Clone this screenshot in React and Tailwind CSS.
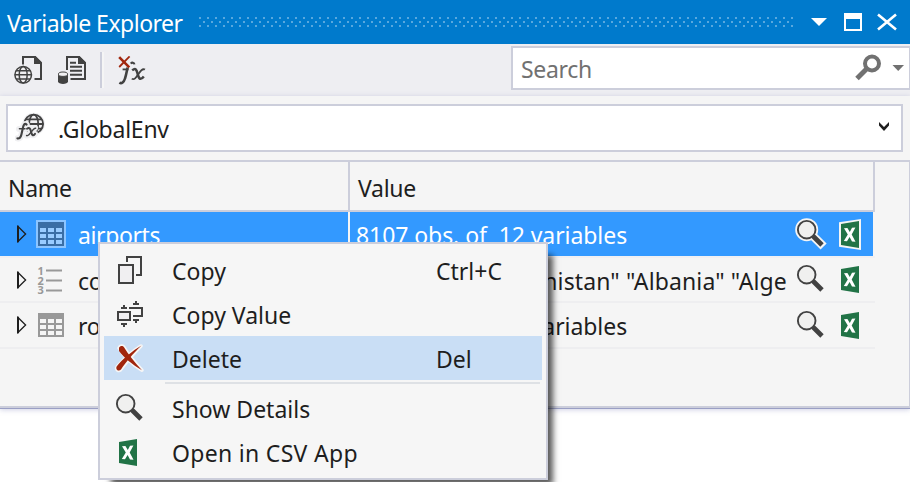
import React from "react";

function Globe({ cx, cy, r, color = "#424242", fill = "#f0eff1", w = 1.6 }) {
  return (
    <g fill="none" stroke={color} strokeWidth={w}>
      <circle cx={cx} cy={cy} r={r} fill={fill} />
      <ellipse cx={cx} cy={cy} rx={r * 0.48} ry={r} />
      <path d={`M${cx - r} ${cy}H${cx + r}M${cx - r * 0.88} ${cy - r * 0.5}H${cx + r * 0.88}M${cx - r * 0.88} ${cy + r * 0.5}H${cx + r * 0.88}`} />
    </g>
  );
}

function Magnifier({ selected }) {
  return (
    <svg width="32" height="33" viewBox="0 0 32 33" className="block shrink-0" fill="none">
      {selected && (
        <g stroke="#f5f5f5">
          <circle cx="11.7" cy="11.7" r="9" strokeWidth="5" />
          <path d="M17.5 17.5L28.6 28.6" strokeWidth="8.5" />
        </g>
      )}
      <path d="M18 18L27 27" stroke="#424242" strokeWidth="4.8" />
      <circle cx="11.7" cy="11.7" r="8.8" fill="#f0f0ef" stroke="#424242" strokeWidth="1.9" />
    </svg>
  );
}

function Excel({ selected }) {
  return (
    <svg width="22" height="31" viewBox="0 0 22 31" className="block shrink-0">
      {selected && <path d="M0 3.2L22 0V31L0 27.8Z" fill="#f5f5f5" />}
      <path d="M2 5L20 2V29L2 26Z" fill="#217346" />
      <path d="M5 9.3L8.4 9.1L10.8 13L13 8.8L16.4 8.5L12.7 15.5L16.5 22.8L13 22.5L10.6 18L8 22.2L4.8 22L8.8 15.6Z" fill="#fff" />
    </svg>
  );
}

function Expander() {
  return (
    <svg width="10" height="18" viewBox="0 0 10 18" className="block shrink-0">
      <path d="M1 1.5L8.6 9L1 16.5Z" fill="none" stroke="#1e1e1e" strokeWidth="1.3" />
      <path d="M1 0.8V17.2" stroke="#1e1e1e" strokeWidth="2" />
    </svg>
  );
}

function TableIcon({ selected }) {
  const cells = [];
  for (let r = 0; r < 3; r++)
    for (let c = 0; c < 3; c++)
      cells.push(<rect key={`${r}${c}`} x={4 + c * 8} y={8 + r * 6} width="6" height="4" fill={selected ? "#99ccff" : "#f5f5f5"} />);
  return (
    <svg width="30" height="28" viewBox="0 0 30 28" className="block shrink-0" shapeRendering="crispEdges">
      {selected && <rect width="30" height="28" fill="#8cc5ff" />}
      <rect x="2" y="2" width="26" height="24" fill={selected ? "#3a6ea5" : "#999999"} />
      {cells}
    </svg>
  );
}

function ListIcon() {
  return (
    <svg width="30" height="30" viewBox="0 0 30 30" className="block shrink-0" fill="#999">
      <g fontFamily="'Noto Sans', sans-serif" fontWeight="700" fontSize="11">
        <text x="1.5" y="9.5">1</text>
        <text x="1.5" y="19.5">2</text>
        <text x="1.5" y="29.3">3</text>
      </g>
      <path d="M10 4.5h16v2H10zM10 14.5h16v2H10zM10 24.5h16v2H10z" />
    </svg>
  );
}

function WebDocIcon() {
  return (
    <svg width="28" height="28" viewBox="0 0 28 28" className="block shrink-0">
      <path d="M9 8.5V1H21L27 7V23H20.5" fill="none" stroke="#424242" strokeWidth="2" />
      <path d="M20 0H21.5L28 6.5V8H20Z" fill="#424242" />
      <Globe cx={9.2} cy={18.8} r={8.3} w={1.5} />
    </svg>
  );
}

function DataDocIcon() {
  return (
    <svg width="28" height="28" viewBox="0 0 28 28" className="block shrink-0">
      <path d="M9 14V1H21L27 7V23H12.5" fill="none" stroke="#424242" strokeWidth="2" />
      <path d="M20 0H21.5L28 6.5V8H20Z" fill="#424242" />
      <path d="M12 6.8h6M12 10.8h12M12 14.8h12M12 18.8h12" stroke="#424242" strokeWidth="1.9" />
      <path d="M0 18.5V25.5C0 28.8 10 28.8 10 25.5V18.5Z" fill="#424242" />
      <ellipse cx="5" cy="18.2" rx="4.6" ry="2.2" fill="#f0eff1" stroke="#424242" strokeWidth="1" />
    </svg>
  );
}

function ClearFxIcon() {
  return (
    <svg width="30" height="30" viewBox="0 0 30 30" className="block shrink-0" fill="none" stroke="#424242">
      <path d="M12.8 7.6C14 6.2 16 6.4 16.4 8.4" strokeWidth="2.2" />
      <path d="M4.6 13.4H10.5" strokeWidth="1.8" />
      <path d="M9.6 11.5C8.6 16 8 19.5 7 22.5C5.9 26.2 3.6 28 1.4 26.6" strokeWidth="2.6" />
      <path d="M14.2 14.4C17.6 11.6 18.6 13.6 19.6 17.6C20.8 22.6 22.2 25 25.8 20.4" strokeWidth="2.5" />
      <path d="M27 13.6C24.4 12 22.4 15 20.4 18C18.2 21.6 16 24.4 13.8 22.6" strokeWidth="1.8" />
      <path d="M1.2 1.2L11.3 11.3" stroke="#a1260d" strokeWidth="2.6" />
      <path d="M11.6 0.4L1.2 11" stroke="#a1260d" strokeWidth="1.8" />
    </svg>
  );
}

function EnvIcon() {
  return (
    <svg width="32" height="32" viewBox="0 0 32 32" className="block shrink-0">
      <circle cx="18.7" cy="12" r="11.3" fill="#efeff1" />
      <Globe cx={18.7} cy={12} r={9.4} w={1.8} fill="#f0eff1" />
      <g fill="none" strokeLinecap="round">
        <g stroke="#efeff1" strokeWidth="6">
          <path d="M11.6 12.6C9.6 10.8 8.4 12.6 7.6 17C6.6 22 6 27.4 2.4 26.4M4 17H10" />
          <path d="M12 16.6C15 14.6 15.4 17 16 19.4C17 23.6 18 24.4 20 21.8M20 16C17 15.6 16 24 11.6 23.6" />
        </g>
        <g stroke="#424242">
          <path d="M11.6 12.6C9.6 10.8 8.4 12.6 7.6 17C6.6 22 6 27.4 2.4 26.4" strokeWidth="2.1" />
          <path d="M4.4 16.8H10" strokeWidth="1.4" />
          <path d="M12 16.8C14.6 15 15.4 17 16 19.4C17 23.6 18 24.4 20 21.8" strokeWidth="2" />
          <path d="M20.6 16.2C17.4 15.6 15.4 24.4 11.6 23.6" strokeWidth="1.5" />
        </g>
      </g>
    </svg>
  );
}

function CopyIcon() {
  return (
    <svg width="24" height="28" viewBox="0 0 24 28" className="block" fill="none" stroke="#424242" strokeWidth="2" shapeRendering="crispEdges">
      <path d="M9 6V1H23V19H18" />
      <rect x="1" y="9" width="14" height="18" fill="#f0eff1" />
    </svg>
  );
}

function CopyValueIcon() {
  return (
    <svg width="26" height="26" viewBox="0 0 26 26" className="block" shapeRendering="crispEdges">
      <path d="M12 7H25V15H16" fill="none" stroke="#424242" strokeWidth="2" />
      <rect x="1" y="11" width="12" height="8" fill="#f0eff1" stroke="#424242" strokeWidth="2" />
      <path d="M4 6H10V8H4zM6 4H8V6H6zM16 2H22V4H16zM18 0H20V2H18zM4 22H10V24H4zM6 24H8V26H6zM16 18H22V20H16zM18 20H20V22H18z" fill="#424242" />
    </svg>
  );
}

function DeleteIcon() {
  return (
    <svg width="32" height="30" viewBox="0 0 32 30" className="block" strokeLinejoin="round">
      <g stroke="#f6f6f6" strokeWidth="3.5" fill="#f6f6f6">
        <path d="M5 5C6.2 2.5 9 2.6 10 4.3C14 11 20 18.5 28 27.3C19 22 10 14 5 5Z" />
        <path d="M27 3C19 8 9 17 3 24C1.6 26.5 4.4 28.5 6.6 26.8C11 21 19 11 27 3Z" />
      </g>
      <g fill="#a1260d">
        <path d="M5 4.7C6.2 2.5 9 2.6 10 4.3C14 11 20 18.5 28 27.3C18 21.5 10 14.5 5 8Z" />
        <path d="M27.5 2.6C18 8 8.5 16.5 2.8 23.3C1 26.5 4.6 29 7 26.5C11.5 20 19 10.5 27.5 2.6Z" />
      </g>
    </svg>
  );
}

function MenuItem({ icon, label, shortcut, active }) {
  return (
    <div className={"flex h-11 items-center " + (active ? "bg-[#c9def5]" : "")}>
      <div className="flex w-[51px] shrink-0 justify-center">{icon}</div>
      <div className="ml-[17px] w-[264px] whitespace-nowrap pt-0.5">{label}</div>
      <div className="whitespace-nowrap pt-0.5">{shortcut}</div>
    </div>
  );
}

function Row({ icon, name, value, selected, height = "h-11", spacing = "tracking-[-0.07px]" }) {
  return (
    <div className={"flex w-[873px] items-center overflow-hidden " + height + (selected ? " bg-[#3399ff] text-white" : "")}>
      <div className="flex w-[348px] shrink-0 items-center pl-[17px]">
        <Expander />
        <div className="ml-[9px]">{icon}</div>
        <span className="ml-3 pt-0.5 tracking-[-0.4px]">{name}</span>
      </div>
      <div className={"h-full w-0.5 shrink-0 " + (selected ? "bg-[#f5f5f5]" : "bg-[#eeeef2]")} />
      <div className={"w-[438px] shrink-0 overflow-hidden whitespace-pre pl-[6px] pt-0.5 " + spacing}>{value}</div>
      <div className="ml-[7px]">
        <Magnifier selected={selected} />
      </div>
      <div className="ml-3">
        <Excel selected={selected} />
      </div>
    </div>
  );
}

export default function App() {
  return (
    <div className="relative h-[482px] w-[910px] overflow-hidden bg-white font-['Noto_Sans','Open_Sans',sans-serif] text-[23px] leading-8 text-[#1e1e1e]">
      <header className="flex h-11 items-center bg-[#007acc] text-white">
        <h1 className="w-[191px] shrink-0 whitespace-nowrap pl-[7px] pt-0.5 tracking-[-0.5px]">Variable Explorer</h1>
        <svg width="602" height="10" className="ml-[8px] block shrink-0" shapeRendering="crispEdges">
          <defs>
            <pattern id="grip" width="8" height="8" patternUnits="userSpaceOnUse">
              <rect width="2" height="2" fill="#59a8de" />
              <rect x="4" y="4" width="2" height="2" fill="#59a8de" />
            </pattern>
          </defs>
          <rect width="594" height="10" fill="url(#grip)" />
        </svg>
        <svg width="88" height="20" viewBox="0 0 88 20" className="ml-[9px] block shrink-0">
          <path d="M1 6H17L9 14Z" fill="#fff" />
          <path d="M34 1H52V19H34ZM36 7V17H50V7Z" fill="#fff" fillRule="evenodd" />
          <path d="M68 2.5L86 17.5M86 2.5L68 17.5" stroke="#fff" strokeWidth="2.6" />
        </svg>
      </header>

      <div className="flex h-[52px] bg-[#eeeef2]">
        <div className="flex h-[52px] w-[511px] shrink-0 items-center pl-[14px]">
          <WebDocIcon />
          <div className="ml-4">
            <DataDocIcon />
          </div>
          <div className="ml-[14px] h-9 w-1 border-l-2 border-[#cccedb] bg-[#f5f5f5]" />
          <div className="ml-[14px] pt-px">
            <ClearFxIcon />
          </div>
        </div>
        <div className="mt-0.5 flex h-11 w-[400px] shrink-0 items-center border-2 border-[#cccedb] bg-white">
          <span className="w-[342px] pl-2 pt-0.5 tracking-[-0.3px] text-[#717171]">Search</span>
          <svg width="52" height="28" viewBox="0 0 52 28" className="block shrink-0">
            <circle cx="17" cy="9.5" r="7" fill="none" stroke="#717171" strokeWidth="4" />
            <path d="M12 14.5L2 24.5" stroke="#717171" strokeWidth="5" />
            <path d="M37.5 11H49L43.2 17Z" fill="#717171" />
          </svg>
        </div>
      </div>

      <main className="h-[313px] border-b border-[#9a9fc4] bg-[#f5f5f5] pt-2 shadow-[0_1px_5px_rgba(120,125,180,0.35)]">
        <div className="ml-1.5 flex h-12 w-[897px] items-center border-2 border-[#cccedb] bg-white pl-[7px]">
          <EnvIcon />
          <span className="ml-[11px] w-[820px] shrink-0 pt-0.5 tracking-[-0.25px]">.GlobalEnv</span>
          <svg width="12" height="14" viewBox="0 0 12 14" className="block shrink-0">
            <path d="M1 1V4.5L6 10L11 4.5V1L6 6Z" fill="#1e1e1e" />
          </svg>
        </div>

        <div className="mt-2 h-[248px] border-y-2 border-r border-[#cccedb]">
          <div className="flex h-[50px] w-[875px] border-b-2 border-r-2 border-[#cccedb]">
            <div className="w-[350px] border-r-2 border-[#cccedb] pl-[8px] pt-[10px] tracking-[-0.3px]">Name</div>
            <div className="pl-[8px] pt-[10px] tracking-[-0.3px]">Value</div>
          </div>
          <Row selected icon={<TableIcon selected />} name="airports" value="8107 obs. of  12 variables" />
          <div className="h-0.5 w-[875px] bg-[#f0f0f3]" />
          <Row height="h-[43px]" spacing="tracking-[0.12px]" icon={<ListIcon />} name="countries" value={' chr [1:23] "Afghanistan" "Albania" "Alge'} />
          <div className="h-0.5 w-[875px] bg-[#eeeef0]" />
          <Row icon={<TableIcon />} name="routes" value="5209 obs. of  10 variables" />
          <div className="h-0.5 w-[875px] bg-[#eeeef0]" />
        </div>
      </main>

      <div className="absolute left-[98px] top-[242px] h-[238px] w-[450px] border-2 border-[#cccedb] bg-[#f6f6f6] p-1 shadow-[9px_9px_6px_-4px_rgba(0,0,0,0.65)]">
        <MenuItem icon={<CopyIcon />} label="Copy" shortcut="Ctrl+C" />
        <MenuItem icon={<CopyValueIcon />} label="Copy Value" />
        <MenuItem active icon={<DeleteIcon />} label="Delete" shortcut="Del" />
        <div className="mb-0.5 ml-[61px] mr-0.5 mt-0.5 h-0.5 bg-[#dee1e5]" />
        <MenuItem icon={<Magnifier />} label="Show Details" />
        <MenuItem icon={<div className="pr-[3px]"><Excel /></div>} label={<span className="tracking-[0.3px]">Open in CSV App</span>} />
      </div>
    </div>
  );
}
